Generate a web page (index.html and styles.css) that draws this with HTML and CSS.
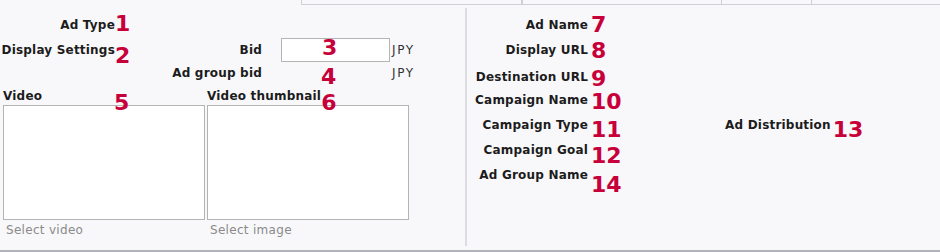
FILE: index.html
```html
<!DOCTYPE html>
<html lang="en">

<head>
    <meta charset="UTF-8">
    <title>Ad Settings</title>
    <link rel="stylesheet" href="styles.css">
</head>

<body>
    <div class="tabs">
        <div class="tab tab-active"></div>
        <div class="tab tab-2"></div>
        <div class="tab tab-3"></div>
        <div class="tab tab-4"></div>
        <div class="tab tab-rest"></div>
    </div>

    <div class="panel">
        <section class="pane-left">
            <div class="row row-type">
                <span class="lbl">Ad Type</span>
                <span class="num dn2">1</span>
            </div>
            <div class="row row-display">
                <span class="lbl">Display Settings</span>
                <span class="num-cell"><span class="num dn9">2</span></span>
                <span class="lbl">Bid</span>
                <span class="bid-field">
                    <input type="text" class="bid-input">
                    <span class="num num-over">3</span>
                </span>
                <span class="unit">JPY</span>
            </div>
            <div class="row row-groupbid">
                <span class="indent"></span>
                <span class="lbl">Ad group bid</span>
                <span class="num-slot"><span class="num dn7">4</span></span>
                <span class="unit">JPY</span>
            </div>
            <div class="row row-video">
                <div class="media-head">
                    <span class="media-lbl">Video</span>
                    <span class="num dn10">5</span>
                </div>
                <div class="media-head">
                    <span>Video thumbnail</span>
                    <span class="num dn10">6</span>
                </div>
            </div>
            <div class="media">
                <div class="media-box"></div>
                <div class="media-box"></div>
            </div>
            <div class="captions">
                <span class="caption">Select video</span>
                <span class="caption">Select image</span>
            </div>
        </section>

        <div class="divider"></div>

        <section class="pane-right">
            <div class="row r-h25">
                <span class="lbl-r">Ad Name</span>
                <span class="num num-r dn3">7</span>
            </div>
            <div class="row r-h27">
                <span class="lbl-r">Display URL</span>
                <span class="num num-r dn4">8</span>
            </div>
            <div class="row r-h23">
                <span class="lbl-r">Destination URL</span>
                <span class="num num-r dn5">9</span>
            </div>
            <div class="row r-h25">
                <span class="lbl-r">Campaign Name</span>
                <span class="num num-r dn5">10</span>
            </div>
            <div class="row r-h25">
                <span class="lbl-r">Campaign Type</span>
                <span class="num-wide"><span class="num num-r dn8">11</span></span>
                <span>Ad Distribution</span>
                <span class="num num-13 dn8">13</span>
            </div>
            <div class="row r-h25">
                <span class="lbl-r">Campaign Goal</span>
                <span class="num num-r dn9">12</span>
            </div>
            <div class="row r-h25">
                <span class="lbl-r">Ad Group Name</span>
                <span class="num num-r dn13">14</span>
            </div>
        </section>
    </div>
</body>

</html>
```

FILE: styles.css
```css
body {
    margin: 0;
    font-family: 'DejaVu Sans', sans-serif;
    font-size: 12px;
    background: #f8f8fb;
    color: #1c1c1c;
}

/* tab strip */
.tabs {
    display: flex;
    height: 5px;
}

.tab {
    box-sizing: border-box;
    height: 5px;
    border-left: 1px solid #cfcfd5;
    border-right: 1px solid #cfcfd5;
    border-bottom: 1px solid #cfcfd5;
}

.tab-active {
    width: 301px;
    border: none;
}

.tab-2 {
    width: 221px;
}

.tab-3 {
    width: 200px;
}

.tab-4 {
    width: 90px;
    border-left: none;
}

.tab-rest {
    flex: 1;
    border-left: none;
    border-right: none;
}

/* panel */
.panel {
    display: flex;
    height: 245px;
    border-bottom: 2px solid #b2b2bc;
}

.pane-left {
    width: 465px;
    padding-top: 14px;
}

.divider {
    width: 2px;
    background: #dcdce2;
    margin: 3px 0 4px;
}

.pane-right {
    flex: 1;
    padding-top: 14px;
}

.row {
    display: flex;
    align-items: baseline;
    font-weight: bold;
    line-height: 12px;
    letter-spacing: 0.2px;
}

.lbl {
    width: 115px;
    text-align: right;
}

.lbl-r {
    width: 121px;
    text-align: right;
}

/* red annotation numbers */
.num {
    position: relative;
    font-size: 22px;
    font-weight: bold;
    line-height: 0;
    letter-spacing: 0;
    color: #c8003a;
}

.num-r {
    margin-left: 3px;
}

.num-13 {
    margin-left: 2px;
}

.dn2 { top: 2px; }
.dn3 { top: 3px; }
.dn4 { top: 4px; }
.dn5 { top: 5px; }
.dn7 { top: 7px; }
.dn8 { top: 8px; }
.dn9 { top: 9px; }
.dn10 { top: 10px; }
.dn13 { top: 13px; }

.num-cell {
    width: 32px;
}

.num-wide {
    width: 137px;
}

/* left rows */
.row-type {
    height: 19px;
}

.row-display {
    height: 29px;
}

.row-groupbid {
    height: 23px;
}

.row-video {
    height: 15px;
    padding-left: 3px;
    gap: 2px;
}

.bid-field {
    display: flex;
    position: relative;
    margin-left: 19px;
}

.bid-input {
    box-sizing: border-box;
    width: 109px;
    height: 24px;
    padding: 0 4px;
    border: 1px solid #b4b4b4;
    background: #fff;
    font-family: 'DejaVu Sans', sans-serif;
    font-size: 12px;
}

.num-over {
    position: absolute;
    left: 41px;
    top: -1px;
    line-height: 22px;
}

.unit {
    margin-left: 2px;
    font-weight: normal;
    letter-spacing: 1.6px;
    color: #333;
}

.indent {
    width: 147px;
}

.num-slot {
    width: 109px;
    margin-left: 19px;
    padding-left: 40px;
    box-sizing: border-box;
}

.media-head {
    display: flex;
    align-items: baseline;
    width: 202px;
}

.media-lbl {
    width: 111px;
}

.media {
    display: flex;
    gap: 2px;
    padding-left: 3px;
}

.media-box {
    box-sizing: border-box;
    width: 202px;
    height: 115px;
    background: #fff;
    border: 1px solid #b4b4b4;
}

.captions {
    display: flex;
    gap: 2px;
    padding-left: 3px;
    margin-top: 4px;
    line-height: 12px;
    letter-spacing: 0.3px;
    color: #8a8a8a;
}

.caption {
    width: 202px;
    padding-left: 3px;
    box-sizing: border-box;
}

/* right rows */
.r-h23 {
    height: 23px;
}

.r-h25 {
    height: 25px;
}

.r-h27 {
    height: 27px;
}
```
